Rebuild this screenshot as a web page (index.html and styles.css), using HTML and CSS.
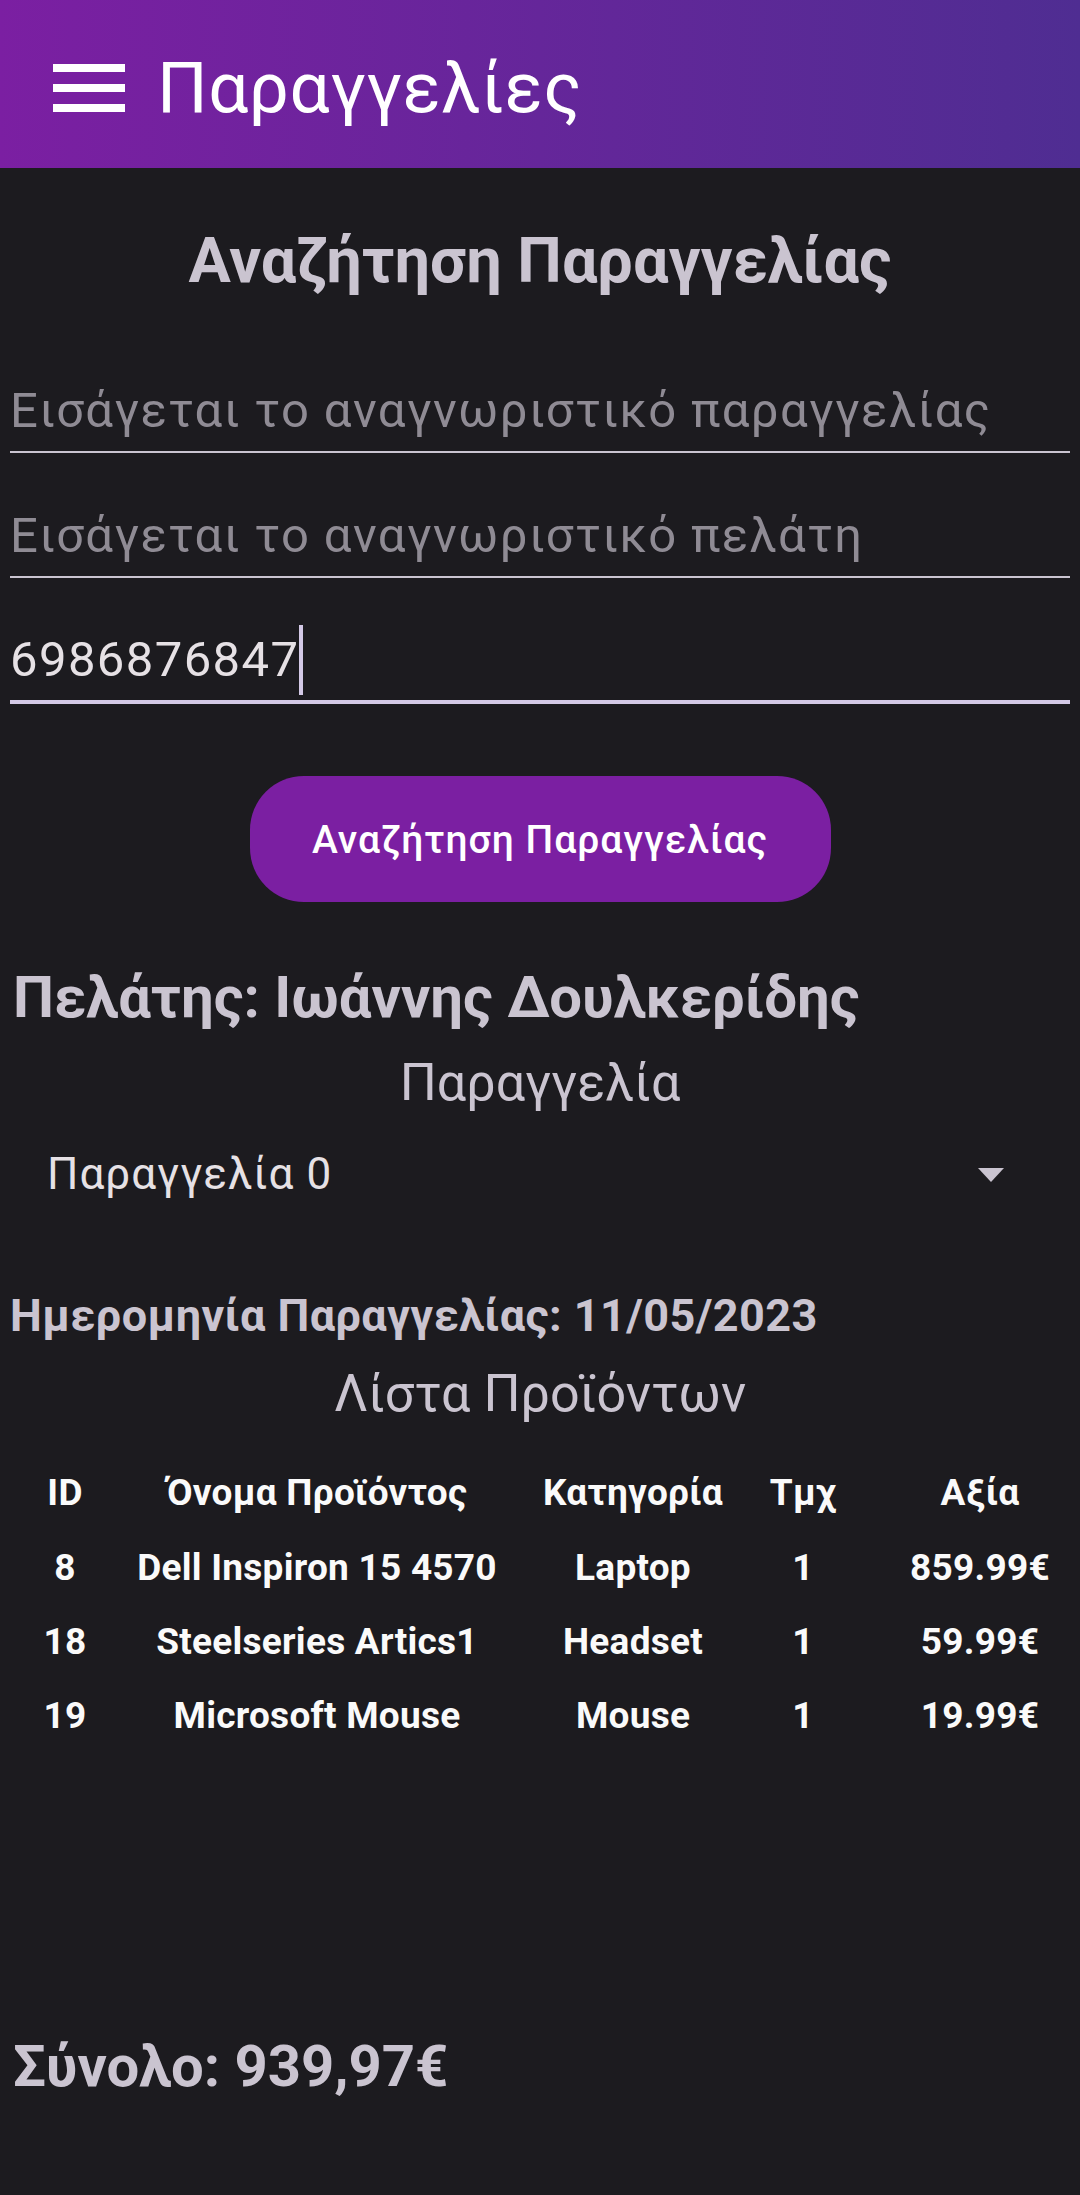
FILE: index.html
```html
<!DOCTYPE html>
<html lang="el">
<head>
<meta charset="utf-8">
<title>Παραγγελίες</title>
<link rel="stylesheet" href="styles.css">
</head>
<body>
<header class="topbar">
  <svg class="menu-icon" width="72" height="48" viewBox="0 0 72 48" aria-hidden="true">
    <rect x="0" y="0" width="72" height="8" fill="#ffffff"/>
    <rect x="0" y="20" width="72" height="8" fill="#ffffff"/>
    <rect x="0" y="40" width="72" height="8" fill="#ffffff"/>
  </svg>
  <h1 class="topbar-title">Παραγγελίες</h1>
</header>
<main class="content">
  <h2 class="search-title">Αναζήτηση Παραγγελίας</h2>
  <div class="field field-first"><span class="placeholder">Εισάγεται το αναγνωριστικό παραγγελίας</span></div>
  <div class="field field-next"><span class="placeholder">Εισάγεται το αναγνωριστικό πελάτη</span></div>
  <div class="field field-next field-focused"><span class="value">6986876847</span><span class="caret"></span></div>
  <div class="btn-row"><button class="search-btn">Αναζήτηση Παραγγελίας</button></div>
  <h3 class="customer">Πελάτης: Ιωάννης Δουλκερίδης</h3>
  <div class="section-label label-order">Παραγγελία</div>
  <div class="dropdown">
    <span class="dropdown-text">Παραγγελία 0</span>
    <svg class="dropdown-arrow" width="26" height="14" viewBox="0 0 26 14" aria-hidden="true">
      <polygon points="0,0 26,0 13,14" fill="#cac4d0"/>
    </svg>
  </div>
  <div class="order-date">Ημερομηνία Παραγγελίας: 11/05/2023</div>
  <div class="section-label label-products">Λίστα Προϊόντων</div>
  <div class="products">
    <div class="cell">ID</div><div class="cell">Όνομα Προϊόντος</div><div class="cell">Κατηγορία</div><div class="cell">Τμχ</div><div class="cell cell-price">Αξία</div>
    <div class="cell">8</div><div class="cell">Dell Inspiron 15 4570</div><div class="cell">Laptop</div><div class="cell">1</div><div class="cell cell-price">859.99€</div>
    <div class="cell">18</div><div class="cell">Steelseries Artics1</div><div class="cell">Headset</div><div class="cell">1</div><div class="cell cell-price">59.99€</div>
    <div class="cell">19</div><div class="cell">Microsoft Mouse</div><div class="cell">Mouse</div><div class="cell">1</div><div class="cell cell-price">19.99€</div>
  </div>
  <div class="total">Σύνολο: 939,97€</div>
</main>
</body>
</html>
```

FILE: styles.css
```css
html, body {
  margin: 0;
  padding: 0;
  background: #1c1b1f;
}
body {
  font-family: Roboto, "Noto Sans", sans-serif;
  min-height: 2195px;
  color: #cac4d0;
}
.topbar {
  height: 168px;
  box-sizing: border-box;
  padding: 8px 0 0 53px;
  display: flex;
  align-items: center;
  gap: 32px;
  background: linear-gradient(to right, #7b1fa2, #4f2d92);
}
.menu-icon { display: block; flex: none; }
.topbar-title {
  margin: 0;
  font-size: 71px;
  font-weight: 400;
  letter-spacing: 0.5px;
  line-height: 1.171875;
  color: #ffffff;
}
.content {
  padding: 0 10px;
}
.search-title {
  margin: 56px 0 0;
  text-align: center;
  font-size: 63px;
  font-weight: 700;
  line-height: 1.171875;
  color: #cac4d0;
}
.field {
  font-size: 49px;
  line-height: 58px;
  letter-spacing: 1.4px;
  padding-bottom: 11px;
  border-bottom: 2px solid #cac4d0;
  display: flex;
  align-items: center;
  white-space: nowrap;
}
.field-first { margin-top: 84px; }
.field-next { margin-top: 54px; }
.field-focused { margin-top: 53px; border-bottom: 4px solid #d3c9e6; }
.placeholder { color: #8f8b94; }
.value { color: #e6e1e5; }
.caret {
  display: block;
  width: 4px;
  height: 70px;
  margin: -6px 0 -6px 0;
  background: #d3c9e6;
}
.btn-row {
  display: flex;
  justify-content: center;
  margin-top: 72px;
}
.search-btn {
  width: 581px;
  height: 126px;
  padding: 5px 0 0;
  border: none;
  border-radius: 54px;
  background: #7b1fa2;
  color: #ffffff;
  font-family: Roboto, "Noto Sans", sans-serif;
  font-size: 39px;
  font-weight: 500;
  letter-spacing: 1px;
  line-height: 1.171875;
}
.customer {
  margin: 62px 0 0;
  padding-left: 3px;
  font-size: 58px;
  font-weight: 700;
  letter-spacing: 0;
  line-height: 1.171875;
  color: #cac4d0;
}
.section-label {
  text-align: center;
  font-size: 52px;
  font-weight: 400;
  line-height: 1.171875;
  color: #cac4d0;
}
.label-order { margin-top: 21px; }
.dropdown {
  margin-top: 35px;
  display: flex;
  align-items: center;
  justify-content: space-between;
  padding: 0 66px 0 37px;
}
.dropdown-text {
  font-size: 44px;
  letter-spacing: 1px;
  line-height: 1.171875;
  color: #e6e1e5;
}
.dropdown-arrow { display: block; }
.order-date {
  margin-top: 90px;
  font-size: 45px;
  font-weight: 700;
  letter-spacing: 0.4px;
  line-height: 1.171875;
  color: #cac4d0;
}
.label-products { margin-top: 21px; }
.products {
  margin-top: 31px;
  display: grid;
  grid-template-columns: 110px 394px 238px 102px 1fr;
  font-size: 37px;
  font-weight: 700;
  letter-spacing: 0.25px;
  line-height: 1.171875;
  color: #fafafa;
}
.cell {
  padding: 15.4px 0;
  text-align: center;
  white-space: nowrap;
}
.cell-price { padding-left: 36px; }
.total {
  margin-top: 280px;
  padding-left: 3px;
  font-size: 58px;
  font-weight: 700;
  line-height: 1.171875;
  color: #cac4d0;
}
```
